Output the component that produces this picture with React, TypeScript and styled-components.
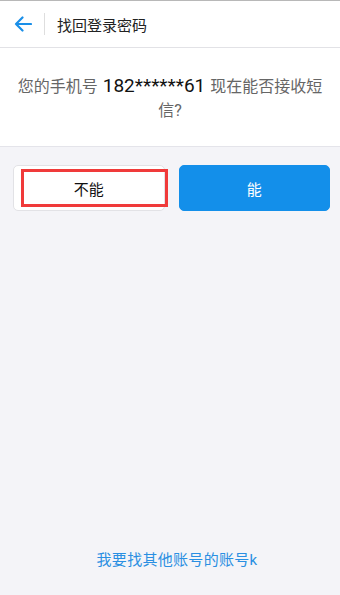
import React from 'react'
import styled, { createGlobalStyle } from 'styled-components'

const GlobalStyle = createGlobalStyle`
  html, body {
    margin: 0;
    padding: 0;
    background: #f4f4f8;
  }
  body {
    font-family: Roboto, "Noto Sans CJK SC", sans-serif;
  }
`

const Page = styled.div`
  width: 340px;
  height: 595px;
  display: flex;
  flex-direction: column;
  background: #f4f4f8;
  border-top: 1px solid #b8b8b8;
  box-sizing: border-box;
`

const Header = styled.div`
  height: 46px;
  display: flex;
  align-items: center;
  background: #fff;
  border-bottom: 1px solid #e2e2e6;
`

const BackButton = styled.div`
  width: 44px;
  height: 100%;
  display: flex;
  align-items: center;
  justify-content: center;
  padding-left: 2px;
  box-sizing: border-box;
`

const Divider = styled.div`
  width: 1px;
  height: 22px;
  background: #dedede;
`

const Title = styled.div`
  margin-left: 12px;
  font-size: 15px;
  color: #222;
`

const QuestionBox = styled.div`
  background: #fff;
  height: 98px;
  padding: 0 12px;
  display: flex;
  align-items: center;
  justify-content: center;
  border-bottom: 1px solid #e4e4ea;
`

const Question = styled.p`
  margin: 0;
  padding-top: 4px;
  text-align: center;
  font-size: 16px;
  line-height: 24px;
  color: #666;
`

const Phone = styled.span`
  font-size: 19px;
  line-height: 20px;
  color: #111;
  margin: 0 1px;
`

const ButtonRow = styled.div`
  display: flex;
  gap: 14px;
  padding: 18px 10px 0 13px;
`

const Choice = styled.div<{ primary?: boolean }>`
  position: relative;
  flex: 1;
  height: 46px;
  display: flex;
  align-items: center;
  justify-content: center;
  border-radius: 5px;
  font-size: 15px;
  box-sizing: border-box;
  background: ${(p) => (p.primary ? '#138fea' : '#fff')};
  color: ${(p) => (p.primary ? '#fff' : '#111')};
  border: 1px solid ${(p) => (p.primary ? '#138fea' : '#e2e2e6')};
`

const Highlight = styled.div`
  position: absolute;
  top: 3px;
  bottom: 3px;
  left: 7px;
  right: -4px;
  border: 3px solid #f03a3a;
  pointer-events: none;
`

const Spacer = styled.div`
  flex: 1;
`

const OtherLink = styled.div`
  text-align: center;
  font-size: 15px;
  letter-spacing: 0.3px;
  color: #2a8fe2;
  padding-bottom: 26px;
  padding-left: 14px;
`

const App: React.FC = () => (
  <>
    <GlobalStyle />
    <Page>
      <Header>
        <BackButton>
          <svg width="18" height="16" viewBox="0 0 18 16" fill="none">
            <path d="M17 8H2M8.5 1.5L2 8l6.5 6.5" stroke="#1a8fe8" strokeWidth="2.2" strokeLinecap="round" strokeLinejoin="round" />
          </svg>
        </BackButton>
        <Divider />
        <Title>找回登录密码</Title>
      </Header>
      <QuestionBox>
        <Question>
          您的手机号 <Phone>182******61</Phone> 现在能否接收短信?
        </Question>
      </QuestionBox>
      <ButtonRow>
        <Choice>
          不能
          <Highlight />
        </Choice>
        <Choice primary>能</Choice>
      </ButtonRow>
      <Spacer />
      <OtherLink>我要找其他账号的账号k</OtherLink>
    </Page>
  </>
)

export default App
